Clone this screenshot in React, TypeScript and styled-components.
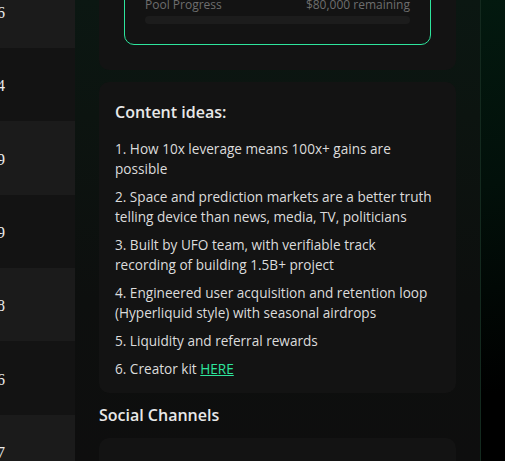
import React from "react";
import styled, { createGlobalStyle } from "styled-components";

const Global = createGlobalStyle`
  html, body { margin: 0; padding: 0; background: #0e0e0e; overflow: hidden; }
  #root { width: 505px; height: 461px; }
`;

const Page = styled.div`
  display: flex;
  width: 505px;
  height: 461px;
  overflow: hidden;
`;

const LeftTable = styled.div`
  width: 75px;
  flex: none;
  overflow: hidden;
  display: flex;
  flex-direction: column;
  margin-top: -25.3px;
`;

const Row = styled.div<{ $alt: boolean }>`
  height: 73.33px;
  flex: none;
  display: flex;
  align-items: center;
  background: ${(p) => (p.$alt ? "#131313" : "#1b1b1b")};
  font-family: "Liberation Serif", serif;
  font-size: 16px;
  color: #ececec;
`;

const Value = styled.span`
  margin-left: -3px;
  padding-top: 3px;
`;

const Main = styled.div`
  width: 405px;
  flex: none;
  overflow: hidden;
  background: linear-gradient(180deg, #0b1712 0%, #0c1410 25%, #0d0f0e 65%, #0e0e0e 100%);
  font-family: "Open Sans", sans-serif;
`;

const Inner = styled.div`
  display: flex;
  flex-direction: column;
  padding: 0 24px;
  margin-top: -81px;
`;

const Card = styled.div`
  background: #131313;
  border-radius: 10px;
  padding: 16px 16px 14px;
`;

const PoolCard = styled(Card)`
  padding: 25px;
  margin-bottom: 12px;
`;

const PoolBox = styled.div`
  border: 1px solid #2ee59d;
  border-radius: 10px;
  padding: 20px;
  display: flex;
  flex-direction: column;
  gap: 4px;
`;

const PoolValue = styled.div`
  font-size: 20px;
  font-weight: 700;
  color: #f0f0f0;
  line-height: 28px;
`;

const PoolRow = styled.div`
  display: flex;
  justify-content: space-between;
  font-size: 12px;
  line-height: 15px;
  color: #6e6e6e;
`;

const Bar = styled.div`
  height: 8px;
  border-radius: 4px;
  background: #1c1c1c;
  overflow: hidden;
`;

const Fill = styled.div`
  height: 100%;
  background: #2ee59d;
`;

const CardTitle = styled.div`
  font-size: 16px;
  font-weight: 600;
  line-height: 28px;
  color: #e8e8e8;
  margin-bottom: 13px;
`;

const List = styled.div`
  display: flex;
  flex-direction: column;
  gap: 8px;
`;

const Item = styled.div`
  font-size: 13.6px;
  line-height: 20px;
  color: #dcdcdc;
`;

const Link = styled.a`
  color: #2ee59d;
  text-decoration: underline;
`;

const SectionTitle = styled.div`
  font-size: 16px;
  font-weight: 600;
  line-height: 28px;
  color: #e8e8e8;
  margin: 8px 0 9px;
`;

const Right = styled.div`
  flex: 1;
  border-left: 1px solid #13291e;
  background: linear-gradient(170deg, #03190f 0%, #02100a 40%, #000000 85%);
`;

const digits = ["6", "4", "9", "9", "8", "6", "7", "2"];

const ideas: React.ReactNode[] = [
  "1. How 10x leverage means 100x+ gains are possible",
  "2. Space and prediction markets are a better truth telling device than news, media, TV, politicians",
  "3. Built by UFO team, with verifiable track recording of building 1.5B+ project",
  "4. Engineered user acquisition and retention loop (Hyperliquid style) with seasonal airdrops",
  "5. Liquidity and referral rewards",
];

export default function App() {
  return (
    <Page>
      <Global />
      <LeftTable>
        {digits.map((d, i) => (
          <Row key={i} $alt={i % 2 === 1}>
            <Value>{d}</Value>
          </Row>
        ))}
      </LeftTable>
      <Main>
        <Inner>
          <PoolCard>
            <PoolBox>
              <PoolValue>$120,000 raised</PoolValue>
              <PoolRow>
                <span>Pool Progress</span>
                <span>$80,000 remaining</span>
              </PoolRow>
              <Bar>
                <Fill style={{ width: "0%" }} />
              </Bar>
            </PoolBox>
          </PoolCard>
          <Card>
            <CardTitle>Content ideas:</CardTitle>
            <List>
              {ideas.map((t, i) => (
                <Item key={i}>{t}</Item>
              ))}
              <Item>
                6. Creator kit <Link href="#">HERE</Link>
              </Item>
            </List>
          </Card>
          <SectionTitle>Social Channels</SectionTitle>
          <Card>
            <CardTitle>[ Twitter / X ]</CardTitle>
          </Card>
        </Inner>
      </Main>
      <Right />
    </Page>
  );
}
